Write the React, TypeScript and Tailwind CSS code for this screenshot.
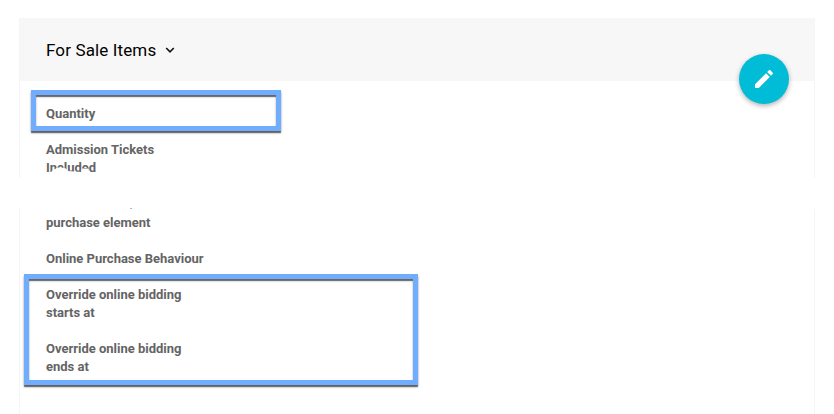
import type { ReactNode } from 'react';

function Label({ children }: { children: ReactNode }) {
  return <div className="w-[190px] text-[13px] leading-[18px] font-bold tracking-[-0.01px] text-[#646464]">{children}</div>;
}

function Highlight({ className }: { className: string }) {
  return (
    <div
      className={`absolute border-[5px] border-[#70adff] shadow-[0_2px_0_rgba(0,0,0,0.35),0_2px_2px_rgba(0,0,0,0.45),inset_0_2px_0_rgba(0,0,0,0.35),inset_0_2px_2px_rgba(0,0,0,0.4)] ${className}`}
    />
  );
}

export default function App() {
  return (
    <div className="relative h-[414px] w-[834px] overflow-hidden bg-white px-[19px] pt-[18px] font-['Roboto',sans-serif]">
      <section className="h-[160px] border-x border-[#f5f5f5]">
        <header className="flex h-[63px] items-center gap-[6px] bg-[#f7f7f7] pl-[26px]">
          <h1 className="text-[17px] leading-6 tracking-[0.13px] text-black">For Sale Items</h1>
          <svg className="h-4 w-4" viewBox="0 0 16 16" fill="none" stroke="#111" strokeWidth="1.6">
            <path d="M4.2 6 8 9.8 11.8 6" />
          </svg>
        </header>
        <div className="flex flex-col gap-[18px] pt-6 pl-[26px]">
          <Label>Quantity</Label>
          <div className="relative">
            <Label>
              Admission Tickets
              <br />
              Included
            </Label>
            <svg className="absolute top-[18px] left-0 h-[18px] w-[60px]" viewBox="0 0 60 18" fill="white">
              <path d="M0 14H4L6 12 9 10 12 8.5 17 9 20 9.5 22 12 28 12.5 35 13 36 9.5 42 9.5 43 13 60 14V18H0Z" />
            </svg>
          </div>
        </div>
      </section>

      <section className="mt-[31px] h-[205px] border-x border-[#f5f5f5] pl-[26px]">
        <div className="flex flex-col gap-[18px] pt-[5px]">
          <Label>purchase element</Label>
          <Label>Online Purchase Behaviour</Label>
          <Label>
            Override online bidding
            <br />
            starts at
          </Label>
          <Label>
            Override online bidding
            <br />
            ends at
          </Label>
        </div>
      </section>

      <div className="absolute top-[208px] left-[130px] h-px w-[2px] bg-[#b5b5b5]" />
      <Highlight className="top-[90px] left-[31px] h-[41px] w-[250px]" />
      <Highlight className="top-[274px] left-[24px] h-[111px] w-[394px]" />

      <button
        aria-label="Edit"
        className="absolute top-[54px] left-[739px] flex h-[50px] w-[50px] items-center justify-center rounded-full bg-[#00bcd7] shadow-[0_2px_5px_rgba(0,0,0,0.3)]"
      >
        <svg className="h-6 w-6" viewBox="0 0 24 24" fill="white">
          <path d="M3 17.25V21h3.75L17.81 9.94l-3.75-3.75L3 17.25zM20.71 7.04a1 1 0 0 0 0-1.41l-2.34-2.34a1 1 0 0 0-1.41 0l-1.83 1.83 3.75 3.75 1.83-1.83z" />
        </svg>
      </button>
    </div>
  );
}
